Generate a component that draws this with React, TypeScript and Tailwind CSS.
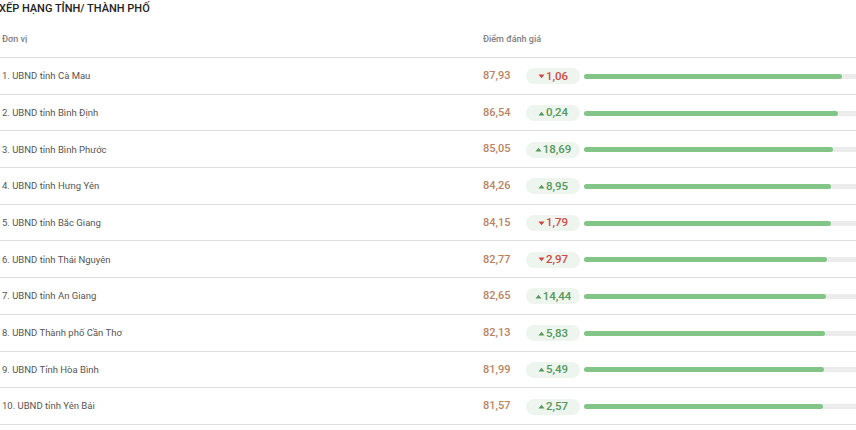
const rows = [
  { name: "1. UBND tỉnh Cà Mau", score: 87.93, delta: -1.06 },
  { name: "2. UBND tỉnh Bình Định", score: 86.54, delta: 0.24 },
  { name: "3. UBND tỉnh Bình Phước", score: 85.05, delta: 18.69 },
  { name: "4. UBND tỉnh Hưng Yên", score: 84.26, delta: 8.95 },
  { name: "5. UBND tỉnh Bắc Giang", score: 84.15, delta: -1.79 },
  { name: "6. UBND tỉnh Thái Nguyên", score: 82.77, delta: -2.97 },
  { name: "7. UBND tỉnh An Giang", score: 82.65, delta: 14.44 },
  { name: "8. UBND Thành phố Cần Thơ", score: 82.13, delta: 5.83 },
  { name: "9. UBND Tỉnh Hòa Bình", score: 81.99, delta: 5.49 },
  { name: "10. UBND tỉnh Yên Bái", score: 81.57, delta: 2.57 },
];

const fmt = (n: number) => Math.abs(n).toFixed(2).replace(".", ",");

function Delta({ value }: { value: number }) {
  const up = value >= 0;
  return (
    <div className="w-[54px] h-[16px] rounded-full bg-[#eef5ef] flex items-center justify-center gap-[1px]">
      <svg width="7" height="5" viewBox="0 0 7 5" className={up ? "" : "rotate-180"}>
        <path d="M0.5 4.5 L3.5 0.8 L6.5 4.5 Z" fill={up ? "#55985a" : "#d0463f"} />
      </svg>
      <span className={`text-[11.5px] font-medium ${up ? "text-[#55985a]" : "text-[#cf4a44]"}`}>{fmt(value)}</span>
    </div>
  );
}

export default function App() {
  return (
    <div className="w-[856px] h-[430px] overflow-hidden bg-white font-['Roboto',sans-serif] text-[#333]">
      <div className="w-[900px] -ml-[1px]">
        <h2 className="h-[22px] pt-[1px] text-[11px] font-medium leading-[16px] text-[#222]">XẾP HẠNG TỈNH/ THÀNH PHỐ</h2>
        <div className="flex items-center h-[36px] pt-[1px] border-b border-[#dedede] text-[9px] text-[#808080] font-medium">
          <div className="w-[484px] pl-[3px]">Đơn vị</div>
          <div>Điểm đánh giá</div>
        </div>
        {rows.map((r) => (
          <div key={r.name} className="flex items-center h-[36.7px] pt-[1px] border-b border-[#dedede]">
            <div className="w-[484px] pl-[3px] text-[9.5px] text-[#555]">{r.name}</div>
            <div className="w-[43px] text-[11px] font-medium text-[#bb8362]">{fmt(r.score)}</div>
            <Delta value={r.delta} />
            <div className="ml-[4px] w-[293px] h-[5px] rounded-full bg-[#ececec]">
              <div className="h-full rounded-full bg-[#82c587]" style={{ width: `${r.score}%` }} />
            </div>
          </div>
        ))}
      </div>
    </div>
  );
}
